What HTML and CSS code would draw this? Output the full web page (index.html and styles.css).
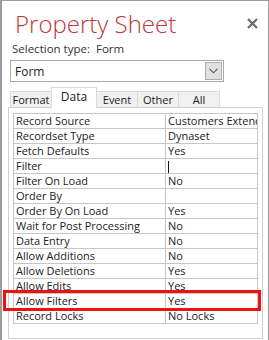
FILE: index.html
```html
<!DOCTYPE html>
<html>
<head>
    <meta charset="UTF-8">
    <title>Property Sheet</title>
    <link rel="stylesheet" href="styles.css">
</head>
<body>
    <div class="sheet">
        <div class="header">
            <h1 class="title">Property Sheet</h1>
            <svg class="close" width="11" height="11" viewBox="0 0 11 11">
                <path d="M1 1 L10 10 M10 1 L1 10" stroke="#6a6a6a" stroke-width="2.2"/>
            </svg>
        </div>
        <p class="selection">Selection type:&nbsp; Form</p>

        <div class="dropdown">
            <span class="dropdown-value">Form</span>
            <span class="dropdown-button">
                <svg width="9" height="6" viewBox="0 0 9 6">
                    <path d="M0.5 0.8 L4.5 4.8 L8.5 0.8" fill="none" stroke="#555" stroke-width="1.1"/>
                </svg>
            </span>
        </div>

        <div class="tabs">
            <div class="tab">Format</div>
            <div class="tab active">Data</div>
            <div class="tab">Event</div>
            <div class="tab">Other</div>
            <div class="tab">All</div>
        </div>

        <div class="panel">
            <table class="props">
                <tr><td>Record Source</td><td>Customers Extended</td></tr>
                <tr><td>Recordset Type</td><td>Dynaset</td></tr>
                <tr><td>Fetch Defaults</td><td>Yes</td></tr>
                <tr><td>Filter</td><td><span class="caret"></span></td></tr>
                <tr><td>Filter On Load</td><td>No</td></tr>
                <tr><td>Order By</td><td></td></tr>
                <tr><td>Order By On Load</td><td>Yes</td></tr>
                <tr><td>Wait for Post Processing</td><td>No</td></tr>
                <tr><td>Data Entry</td><td>No</td></tr>
                <tr><td>Allow Additions</td><td>No</td></tr>
                <tr><td>Allow Deletions</td><td>Yes</td></tr>
                <tr><td>Allow Edits</td><td>Yes</td></tr>
                <tr><td>Allow Filters</td><td>Yes</td></tr>
                <tr><td>Record Locks</td><td>No Locks</td></tr>
            </table>
        </div>

        <div class="highlight"></div>
    </div>
</body>
</html>
```

FILE: styles.css
```css
body {
  margin: 0;
  background-color: #ffffff;
  font-family: "Open Sans", "Noto Sans", sans-serif;
  color: #222;
}

.sheet {
  position: relative;
  box-sizing: border-box;
  width: 269px;
  height: 340px;
  border: 1px solid #9c9c9c;
  border-left-width: 2px;
  border-bottom: none;
  padding: 0 6px 0 6px;
}

.header {
  display: flex;
  justify-content: space-between;
  align-items: flex-start;
  padding: 7px 3px 0 7px;
}

.title {
  margin: 0;
  font-size: 24px;
  font-weight: 300;
  line-height: 32px;
  color: #bd3538;
}

.close {
  margin-top: 10px;
  margin-right: 1px;
}

.selection {
  margin: 0;
  padding-left: 4px;
  font-size: 11.5px;
  line-height: 18px;
  color: #333;
}

.dropdown {
  display: flex;
  justify-content: space-between;
  align-items: center;
  box-sizing: border-box;
  width: 214px;
  height: 22px;
  margin-top: 2px;
  margin-left: 2px;
  border: 1px solid #a8a8a8;
  padding: 0 1px 0 4px;
  font-size: 12px;
}

.dropdown-button {
  display: flex;
  align-items: center;
  justify-content: center;
  box-sizing: border-box;
  width: 17px;
  height: 18px;
  background-color: #e1e1e1;
  border: 1px solid #adadad;
}

.tabs {
  display: flex;
  align-items: flex-end;
  height: 20px;
  margin-top: 5px;
  margin-left: 2px;
}

.tab {
  box-sizing: border-box;
  width: 42px;
  height: 16px;
  background-color: #f0f0f0;
  border: 1px solid #d9d9d9;
  border-bottom: none;
  margin-right: -1px;
  text-align: center;
  font-size: 11px;
  line-height: 15px;
  color: #222;
}

.tab.active {
  width: 46px;
  height: 21px;
  background-color: #fff;
  position: relative;
  z-index: 1;
  line-height: 18px;
  font-size: 12px;
  margin-bottom: -1px;
}

.panel {
  box-sizing: border-box;
  height: 232px;
  margin-right: -1px;
  border: 1px solid #cfcfcf;
  padding: 5px 4px 0 4px;
}

.props {
  border-collapse: collapse;
  width: 245px;
  table-layout: fixed;
  font-size: 11px;
}

.props td {
  border: 1px solid #c6c6c6;
  height: 14px;
  padding: 0 2px;
  line-height: 14px;
  white-space: nowrap;
  overflow: hidden;
}

.props td:first-child {
  width: 147px;
}

.caret {
  display: inline-block;
  width: 1px;
  height: 12px;
  background-color: #111;
  vertical-align: middle;
}

.highlight {
  position: absolute;
  left: 1px;
  top: 289px;
  width: 252px;
  height: 15px;
  border: 3px solid #ee1111;
}
```
